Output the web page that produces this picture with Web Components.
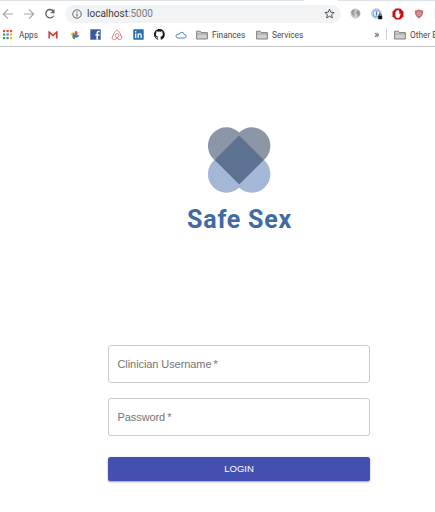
<!DOCTYPE html>
<html lang="en"><head><meta charset="utf-8"><title>Safe Sex</title>
<style>html,body{margin:0;height:100%;overflow:hidden;background:#fff}</style></head>
<body>
<browser-chrome></browser-chrome>
<login-page></login-page>
<script>
const define=(name,html)=>customElements.define(name,class extends HTMLElement{
  constructor(){super();this.attachShadow({mode:'open'}).innerHTML=html;}
});

const icons={
back:[12,'<path d="M11 6H1.5M6 1.3 1.3 6 6 10.7" fill="none" stroke="#a5a8ac" stroke-width="1.2"/>'],
forward:[12,'<path d="M1 6h9.5M6 1.3 10.7 6 6 10.7" fill="none" stroke="#a5a8ac" stroke-width="1.2"/>'],
reload:[12,'<path d="M9.3 3.1A4.2 4.2 0 1 0 9.7 7.7" fill="none" stroke="#5b5e62" stroke-width="1.3"/><path d="M10.5 1v4.2H6.3z" fill="#5b5e62"/>'],
info:[10,'<circle cx="5" cy="5" r="4.2" fill="none" stroke="#5f6368"/><path d="M5 4.4v3.1M5 2.4v1.1" stroke="#5f6368" stroke-width="1.1"/>'],
star:[11,'<path d="M5.5 1.2 6.8 4.2l3.3.3-2.5 2.2.7 3.2-2.8-1.7-2.8 1.7.7-3.2L.9 4.5l3.3-.3z" fill="none" stroke="#4f5256" stroke-width="1"/>'],
globe:[11,'<circle cx="5.5" cy="5.5" r="5" fill="#cbcbcb"/><path d="M1 3.4 3.3 1.4l2 .6-.8 1.6-1.2 1.1L4.6 6 4 8.7 2 6.2zM6.6 3l2.2-.8 1.4 3-1 2.6-1.7 1L7.3 6.6 6 5.2z" fill="#999"/>'],
lock:[12,'<circle cx="5.5" cy="5.5" r="4.7" fill="#f4f8fd" stroke="#a9adb4" stroke-width="1"/><circle cx="5.5" cy="5.5" r="3.3" fill="none" stroke="#6ea2ee" stroke-width="1.1"/><path d="M5.5 3.4v4.2" stroke="#3f79cf" stroke-width="1.3"/><path d="M7.2 7.8h4v3.4h-4z" fill="#111"/><path d="M8.1 8V7a1.1 1.1 0 0 1 2.2 0v1" fill="none" stroke="#222" stroke-width=".8"/>'],
hand:[12,'<path d="M3.7.5h4.6l3.2 3.2v4.6l-3.2 3.2H3.7L.5 8.3V3.7z" fill="#c50f0f"/><path d="M3.4 5.8V3.7q.5-.6.9 0V2.7q.5-.6 1 0v-.4q.5-.6 1 0v.5q.6-.5 1 0v3.5l.7-.7q.7 0 .6.6L7.4 9.4Q6.5 10.3 5 9.9 3.4 9.3 3.4 7.5z" fill="#fff"/>'],
shield:[10,'<path d="M5 .5 9.2 1.8Q9.6 7 5 9.6.4 7 .8 1.8z" fill="#c66b6d"/><circle cx="5" cy="4.6" r="1.9" fill="none" stroke="#e3b4b4" stroke-width=".8"/><path d="M4.2 4.6h1.6" stroke="#ead0d0" stroke-width=".8"/>'],
apps:[10,[0,1,2].map(r=>[0,1,2].map(c=>`<rect x="${c*3.5}" y="${r*3.5}" width="2.2" height="2.2" fill="${[['#e64a3b','#e64a3b','#e64a3b'],['#26a55b','#4285f4','#f2b51d'],['#26a55b','#26a55b','#f2b51d']][r][c]}"/>`).join('')).join('')],
mail:[10,'<path d="M.5 1.5h9v7h-9z" fill="#eee"/><path d="M1.2 8.6V2.2L5 5.6l3.8-3.4v6.4" fill="none" stroke="#c93a32" stroke-width="1.5"/>'],
photos:[10,'<path d="M5 5V.7Q8 1.2 7.7 4z" fill="#e8493d"/><path d="M5 5h4.3Q8.8 8 6 7.7z" fill="#4285f4"/><path d="M5 5v4.3Q2 8.8 2.3 6z" fill="#3aa757"/><path d="M5 5H.7Q1.2 2 4 2.3z" fill="#f4b71d"/><path d="m5 5 2.7-1L6 7.7 2.3 6 4 2.3z" fill="#626da5"/>'],
facebook:[11,'<path d="M.3.3h10.4v10.4H.3z" fill="#3c5a9b"/><path d="M7.2 10.7V4q0-1.5 1.5-1.5h1M5.4 6h4.1" fill="none" stroke="#fff" stroke-width="1.5"/>'],
airbnb:[12,'<path d="M6 9.1C3.2 6.4 4 4.8 6 4.8s2.8 1.6 0 4.3c-2 2.2-4.8 2-4.8-.3C1.2 8 4.2 1.1 6 1.1S10.8 8 10.8 8.8c0 2.3-2.8 2.5-4.8.3z" fill="none" stroke="#dc7779" stroke-width="1"/>'],
linkedin:[11,'<rect x=".3" y=".3" width="10.4" height="10.4" rx=".6" fill="#2670ad"/><path d="M2.7 4.4v4.5M2.7 2v1.4M5.2 8.9V4.4M5.2 6.2q.2-1.3 1.6-1.3 1.4 0 1.4 1.6v2.4" fill="none" stroke="#fff" stroke-width="1.3"/>'],
github:[16,'<path fill="#171717" d="M8 0C3.6 0 0 3.6 0 8c0 3.5 2.3 6.5 5.5 7.6.4.1.5-.2.5-.4v-1.5c-2 .4-2.7-.5-2.9-1-.1-.2-.5-1-.8-1.2-.3-.1-.7-.5 0-.5.6 0 1.1.6 1.2.8.7 1.2 1.9.9 2.3.7.1-.5.3-.9.5-1.1-1.8-.2-3.6-.9-3.6-4 0-.8.3-1.6.8-2.1-.1-.2-.4-1 .1-2.1 0 0 .7-.2 2.2.8a7.6 7.6 0 0 1 4 0c1.5-1 2.2-.8 2.2-.8.5 1.1.2 1.9.1 2.1.5.6.8 1.3.8 2.1 0 3.1-1.9 3.8-3.6 4 .3.2.5.7.5 1.5v2.2c0 .2.2.5.6.4A8 8 0 0 0 8 0z"/>'],
cloud:[12,'<path d="M3 9h6.3q2-.2 1.9-1.8-.2-1.6-1.9-1.6Q8.8 3.2 6.6 3.3 4.9 3.4 4.3 5 1 4.8.9 7q.1 1.8 2.1 2z" fill="none" stroke="#4e83bd" stroke-width="1"/>'],
folder:[12,'<path d="M.6 10V2.2h3.7l.9 1.4h6.2V10z" fill="#cfcfcf" stroke="#777" stroke-width=".9"/><path d="M1 5h10" stroke="#8a8a8a" stroke-width=".7"/>']
};
customElements.define('ui-icon',class extends HTMLElement{
  connectedCallback(){
    const [box,art]=icons[this.getAttribute('name')],s=this.getAttribute('size')||box;
    if(!this.shadowRoot)this.attachShadow({mode:'open'});
    this.shadowRoot.innerHTML=`<style>:host{display:block;flex:none}svg{display:block}</style><svg width="${s}" height="${s}" viewBox="0 0 ${box} ${box}">${art}</svg>`;
  }
});

define('address-bar',`<style>:host{display:flex;align-items:center;box-sizing:border-box;width:276px;height:18px;border-radius:9px;background:#f1f3f4;padding:0 6px 0 7px;font:10px/18px Roboto,sans-serif;color:#3c4043}
.url{margin-left:5px;flex:1;letter-spacing:.01px}.url span{color:#777b80}</style>
<ui-icon name="info"></ui-icon><div class="url">localhost<span>:5000</span></div><ui-icon name="star"></ui-icon>`);

define('bookmark-folder',`<style>:host{display:flex;align-items:center;gap:4px}</style><ui-icon name="folder"></ui-icon><slot></slot>`);

define('browser-chrome',`<style>
:host{display:block;height:47px;box-sizing:border-box;border-bottom:1px solid #c4c4c4;background:#fff;overflow:hidden}
.tabs{display:flex;justify-content:space-between;height:1px;background:#fff}.tabs i{width:304px;background:#dee1e6}.tabs i+i{width:97px}
.nav{display:flex;align-items:center;height:25px;padding-left:2px}.nav>*{flex:none}
.marks{display:flex;align-items:center;height:17px;padding-left:3px;font:8.3px/16px Roboto,sans-serif;color:#44474b;white-space:nowrap}.marks>*{flex:none}
.rule{width:1px;height:11px;background:#d0d0d0}
</style>
<div class="tabs"><i></i><i></i></div>
<div class="nav"><ui-icon name="back"></ui-icon><ui-icon name="forward" style="margin-left:9px"></ui-icon><ui-icon name="reload" style="margin-left:9px"></ui-icon><address-bar style="margin-left:9px"></address-bar>
<ui-icon name="globe" style="margin-left:9px"></ui-icon><ui-icon name="lock" style="margin-left:10px"></ui-icon><ui-icon name="hand" style="margin-left:9px"></ui-icon><ui-icon name="shield" style="margin-left:10px"></ui-icon><div class="rule" style="margin-left:10px;width:3px;background:#f1f3f4"></div></div>
<div class="marks"><ui-icon name="apps"></ui-icon><span style="margin-left:6px;width:20px">Apps</span><ui-icon name="mail" style="margin-left:9px"></ui-icon><ui-icon name="photos" style="margin-left:12px"></ui-icon><ui-icon name="facebook" style="margin-left:10px"></ui-icon><ui-icon name="airbnb" style="margin-left:10px"></ui-icon><ui-icon name="linkedin" style="margin-left:10px"></ui-icon><ui-icon name="github" size="11" style="margin-left:10px"></ui-icon><ui-icon name="cloud" style="margin-left:10px"></ui-icon>
<bookmark-folder style="margin-left:9px;width:60px">Finances</bookmark-folder><bookmark-folder style="width:118px">Services</bookmark-folder><span style="font-size:11px;width:12px">»</span><div class="rule"></div><bookmark-folder style="margin-left:7px">Other Bookmarks</bookmark-folder></div>`);

define('brand-logo',`<style>:host{display:flex;flex-direction:column;align-items:center}svg{display:block}
h1{margin:12px 0 0;font:700 25px/30px Roboto,sans-serif;letter-spacing:.75px;margin-right:-1px;color:#4069a5;white-space:nowrap}</style>
<svg width="64" height="66" viewBox="207 127 64 66"><g fill="#a3b7d6"><circle cx="226.4" cy="174.2" r="18.5"/><circle cx="251.9" cy="174.2" r="18.5"/></g><g fill="#8b97a7"><circle cx="226.4" cy="145.8" r="18.5"/><circle cx="251.9" cy="145.8" r="18.5"/></g><path d="m239.2 135.5 24.5 24.5-24.5 24.5-24.5-24.5z" fill="#5d7190"/></svg>
<h1>Safe Sex</h1>`);

define('text-field',`<style>:host{display:block;box-sizing:border-box;height:38px;border:1px solid #cbcbcb;border-radius:3px;padding:0 8.5px;font:11px/36px "Liberation Sans",Arial,sans-serif;letter-spacing:-.08px;color:#757575}</style><slot></slot><span>&#8201;*</span>`);

define('primary-button',`<style>:host{display:block}button{display:block;width:100%;height:24px;border:0;border-radius:2.5px;padding:0;background:#4350af;color:#fff;font:9.5px/24px "Liberation Sans",Arial,sans-serif;box-shadow:0 1px 2px rgba(0,0,0,.4)}</style><button><slot></slot></button>`);

define('login-page',`<style>:host{display:flex;flex-direction:column;align-items:center;width:262px;margin-left:108px;padding-top:80px}
form{display:flex;flex-direction:column;width:100%;margin-top:110px;gap:15px}primary-button{margin-top:6px}</style>
<brand-logo></brand-logo><form><text-field>Clinician Username</text-field><text-field>Password</text-field><primary-button>LOGIN</primary-button></form>`);
</script></body></html>
